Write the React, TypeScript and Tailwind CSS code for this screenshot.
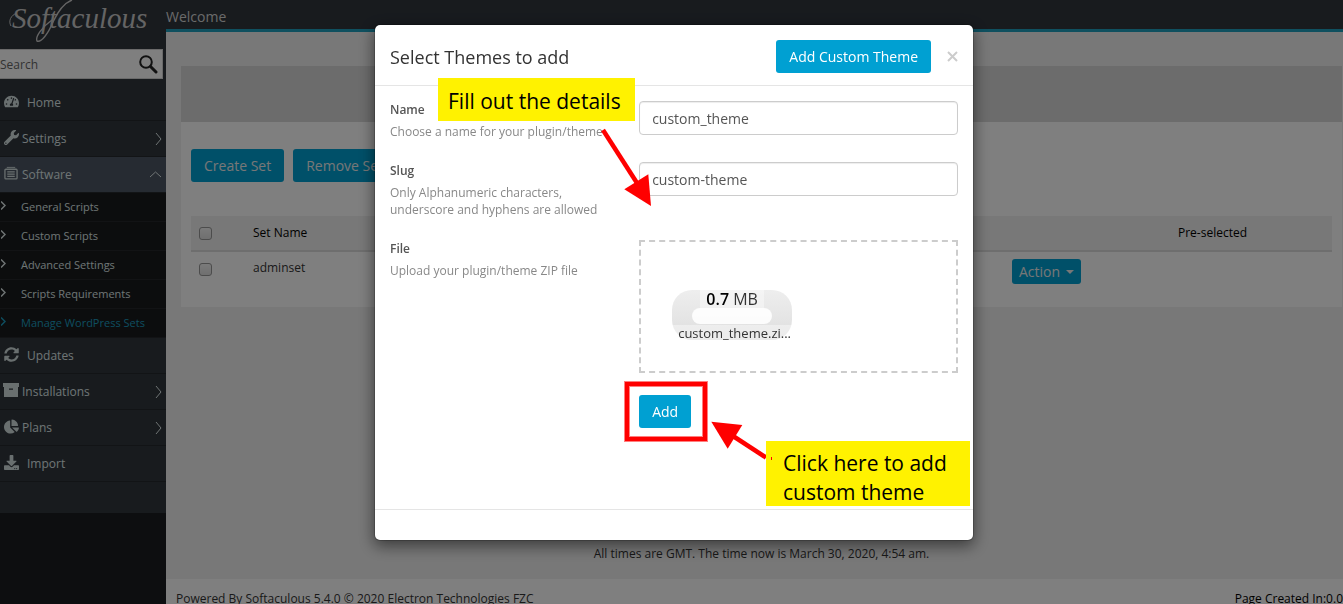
import { ReactNode, useState } from "react";
import {
  FaChartPie,
  FaDownload,
  FaSyncAlt,
  FaTachometerAlt,
  FaWrench,
} from "react-icons/fa";

type MenuItemProps = {
  icon: ReactNode;
  label: string;
  arrow?: "right" | "up";
  active?: boolean;
  wide?: boolean;
};

const subMenu = [
  "General Scripts",
  "Custom Scripts",
  "Advanced Settings",
  "Scripts Requirements",
  "Manage WordPress Sets",
];

const ListIcon = () => (
  <svg width="14" height="14" viewBox="0 0 15 14" fill="none" stroke="currentColor">
    <path d="M3 1h9" />
    <rect x="1" y="3" width="13" height="10.3" rx="1" strokeWidth="1.4" />
    <path d="M3.5 5.8h8M3.5 8.2h8M3.5 10.6h8" strokeWidth="1.2" />
  </svg>
);

const ArchiveIcon = () => (
  <svg width="16" height="14" viewBox="0 0 16 14" fill="currentColor">
    <path d="M0 0h16v4H0z" />
    <path d="M1 4h14v10H1zM6 5.600v1.200h4V5.600z" fillRule="evenodd" />
  </svg>
);

const MenuItem = (props: MenuItemProps) => {
  return (
    <a
      href="#"
      className={`flex h-9 items-center border-b border-[#24282d] pl-[3px] pr-1 text-[12px] text-[#dfe9e9] ${
        props.active ? "bg-[#4c5664]" : ""
      } ${props.wide ? "gap-2" : "gap-[3px]"}`}
    >
      <span className="flex w-4 shrink-0 justify-center pb-[3px] text-[15px] text-[#d2dede]">
        {props.icon}
      </span>
      <span className="flex-1">{props.label}</span>
      {props.arrow === "right" && (
        <svg width="7" height="14" viewBox="0 0 7 14" fill="none" stroke="currentColor">
          <path d="M1 1l5 6-5 6" />
        </svg>
      )}
      {props.arrow === "up" && (
        <svg width="13" height="7" viewBox="0 0 13 7" fill="none" stroke="currentColor">
          <path d="M1 6l5.500-5 5.500 5" />
        </svg>
      )}
    </a>
  );
};

const Sidebar = () => {
  return (
    <aside className="w-[166px] shrink-0 bg-[#1a1d20]">
      <div className="bg-[#30363d] pb-[31px]">
        <a href="#" className="relative block h-[49px] pl-3 text-[#c9c9c9]">
          <span className="block font-['Liberation_Serif',serif] text-[29px] leading-9 italic">
            Softaculous
          </span>
          <svg
            className="absolute left-2 top-0"
            width="80"
            height="46"
            viewBox="0 0 80 46"
            fill="none"
            stroke="currentColor"
          >
            <path d="M9 13C3 15 0 21 3 26" />
            <path d="M64 0C56 3 50 11 45 22C40 34 33 43 29 41C27 37 34 27 44 20" strokeWidth="1.400" />
          </svg>
        </a>
        <form className="mr-[3px] flex h-[30px] items-center border border-[#d5d5d5] border-l-0 bg-white">
          <input
            type="text"
            aria-label="Search"
            placeholder="Search"
            className="min-w-0 flex-1 pt-[2px] text-[12px] text-[#555] placeholder:text-[#666]"
          />
          <button type="button" aria-label="Search" className="pr-1">
            <svg width="20" height="20" viewBox="0 0 20 20" fill="none" stroke="#222">
              <circle cx="8" cy="8" r="5.800" strokeWidth="2" />
              <path d="M12.500 12.500l5.500 5.500" strokeWidth="3" strokeLinecap="round" />
            </svg>
          </button>
        </form>
        <nav className="pt-[6px]">
          <MenuItem icon={<FaTachometerAlt />} label="Home" wide />
          <MenuItem icon={<FaWrench />} label="Settings" arrow="right" />
          <MenuItem icon={<ListIcon />} label="Software" arrow="up" active />
          <ul className="bg-[#181a1c]">
            {subMenu.map((item, i) => (
              <li key={item}>
                <a
                  href="#"
                  className={`flex h-[29px] items-center gap-[15px] border-b border-[#24272a] pl-px text-[11px] ${
                    i === 4 ? "text-[#1d9cbf]" : "text-[#dfe9e9]"
                  }`}
                >
                  <svg className="mb-1" width="5" height="9" viewBox="0 0 5 9" fill="none" stroke="currentColor">
                    <path d="M0 .5l4 4-4 4" strokeWidth="1.500" />
                  </svg>
                  {item}
                </a>
              </li>
            ))}
          </ul>
          <MenuItem icon={<FaSyncAlt />} label="Updates" wide />
          <MenuItem icon={<ArchiveIcon />} label="Installations" arrow="right" />
          <MenuItem icon={<FaChartPie />} label="Plans" arrow="right" />
          <MenuItem icon={<FaDownload />} label="Import" wide />
        </nav>
      </div>
    </aside>
  );
};

const checkboxClass =
  "block size-[13px] appearance-none rounded-[3px] border border-[#999] bg-linear-to-b from-[#f5f5f5] to-[#e0e0e0]";

const SetsPage = () => {
  return (
    <div className="flex min-w-0 flex-1 flex-col bg-[#f0f0f0]">
      <header className="h-8 border-b-3 border-[#1ea1bf] bg-[#30363d] pt-[6px] text-[14px] leading-[22px] text-[#d5d5d5]">
        Welcome
      </header>
      <main className="flex flex-1 flex-col pl-[15px] pr-px pt-[34px]">
        <div className="h-14 bg-[#d9d9d9]" />
        <div className="bg-white px-[10px] pb-5 pt-[27px]">
          <div className="flex gap-[9px] text-[14px] text-[#eee]">
            <button className="h-[33px] rounded-[3px] bg-[#00a0d2] px-[13px]">Create Set</button>
            <button className="h-[33px] rounded-[3px] bg-[#00a0d2] px-[13px]">Remove Set</button>
          </div>
          <table className="mt-[34px] w-full table-fixed text-left text-[12px]">
            <thead>
              <tr className="h-[35px] border-b-2 border-[#ddd] bg-[#f0f0f0] text-black">
                <th className="w-[62px] pl-2">
                  <input type="checkbox" aria-label="Select all sets" className={checkboxClass} />
                </th>
                <th className="font-medium">Set Name</th>
                <th className="w-[166px]"></th>
                <th className="w-[154px] font-medium">Pre-selected</th>
              </tr>
            </thead>
            <tbody>
              <tr className="h-9 align-top text-[#333]">
                <td className="pl-2 pt-[11px]">
                  <input type="checkbox" aria-label="Select adminset" className={checkboxClass} />
                </td>
                <td className="pt-[7px] leading-[18px]">adminset</td>
                <td className="pt-[7px]">
                  <button className="flex h-[25px] items-center gap-[6px] rounded-[3px] bg-[#00a0d2] px-[7px] text-[14px] text-[#eee]">
                    Action
                    <svg width="8" height="4" viewBox="0 0 8 4" fill="currentColor">
                      <path d="M0 0h8L4 4z" />
                    </svg>
                  </button>
                </td>
                <td></td>
              </tr>
            </tbody>
          </table>
        </div>
        <p className="mt-auto pb-4 text-center text-[12px] leading-[18px] text-[#333]">
          All times are GMT. The time now is March 30, 2020, 4:54 am.
        </p>
      </main>
      <footer className="flex h-[25px] shrink-0 justify-between bg-white pl-[10px] pt-[11px] text-[12px] leading-[18px] text-[#333]">
        <span>Powered By Softaculous 5.4.0 © 2020 Electron Technologies FZC</span>
        <span className="text-black">Page Created In:0.0</span>
      </footer>
    </div>
  );
};

type FieldProps = {
  id: string;
  label: string;
  help: ReactNode;
  children: ReactNode;
};

const Field = (props: FieldProps) => {
  return (
    <div className="grid grid-cols-12">
      <div className="col-span-5 pl-[15px]">
        <label htmlFor={props.id} className="block text-[12px] leading-[17px] font-semibold text-[#555]">
          {props.label}
        </label>
        <p className="mt-[5px] text-[12px] leading-[17px] whitespace-nowrap text-[#888]">{props.help}</p>
      </div>
      <div className="col-span-7 px-[15px]">{props.children}</div>
    </div>
  );
};

const inputClass =
  "block h-[34px] w-full rounded-[4px] border border-[#ccc] px-3 text-[14px] text-[#555] shadow-[inset_0_1px_1px_rgba(0,0,0,0.075)]";

// Callouts drawn over the dialog, positioned from its top left corner
const Callouts = () => {
  return (
    <div className="pointer-events-none absolute inset-0 font-['Open_Sans',sans-serif] text-[21px] text-black">
      <svg className="absolute left-0 top-0" width="598" height="515" viewBox="375 25 598 515">
        <path d="M603 130L637 183" stroke="#f00" strokeWidth="4.500" />
        <path d="M651 206L624.300 189.300L648.300 174.300Z" fill="#f00" />
        <path d="M766 457.500L733 436" stroke="#f00" strokeWidth="4.500" />
        <path d="M711.300 421.700L742.300 425L727.700 448.700Z" fill="#f00" />
      </svg>
      <div className="absolute left-[250px] top-[357px] h-[59px] w-[82px] border-4 border-[#ff0000] shadow-[0_0_0_1px_rgba(255,0,0,0.5),inset_0_0_0_1px_rgba(255,0,0,0.5)]" />
      <p className="absolute left-[63px] top-[53px] h-[43px] w-[197px] bg-[#fff200] pl-[10px] leading-[46px] whitespace-nowrap">
        Fill out the details
      </p>
      <p className="absolute left-[391px] top-[416px] h-[65px] w-[204px] bg-[#fff200] pl-[17px] pt-2 leading-[29px] whitespace-nowrap">
        Click here to add
        <br />
        custom theme
      </p>
      <span className="absolute left-[396px] top-[432px] h-[3px] w-px bg-[#f00]" />
    </div>
  );
};

const AddThemeModal = () => {
  const [name, setName] = useState("custom_theme");
  const [slug, setSlug] = useState("custom-theme");

  return (
    <div className="fixed inset-0 flex items-start justify-center bg-black/50 pl-[5px] pt-6">
      <div
        role="dialog"
        aria-labelledby="modal-title"
        className="relative w-[600px] rounded-[6px] border border-black/20 bg-white bg-clip-padding shadow-[0_5px_15px_rgba(0,0,0,0.5)]"
      >
        <div className="flex items-center border-b border-[#e5e5e5] px-[15px] pb-3 pt-[15px]">
          <h4 id="modal-title" className="flex-1 pt-px text-[18px] text-[#333]">
            Select Themes to add
          </h4>
          <button className="h-[33px] rounded-[3px] bg-[#00a0d2] px-[13px] text-[14px] font-medium text-white">
            Add Custom Theme
          </button>
          <button aria-label="Close" className="ml-4 text-[#ccc]">
            <svg width="11" height="11" viewBox="0 0 11 11" stroke="currentColor" strokeWidth="2">
              <path d="M1 1l9 9M10 1l-9 9" />
            </svg>
          </button>
        </div>
        <form className="pb-[81px] pt-[15px]" onSubmit={(e) => e.preventDefault()}>
          <Field id="name" label="Name" help="Choose a name for your plugin/theme">
            <input id="name" className={inputClass} value={name} onChange={(e) => setName(e.target.value)} />
          </Field>
          <div className="pt-[22px]">
            <Field
              id="slug"
              label="Slug"
              help={
                <>
                  Only Alphanumeric characters,
                  <br />
                  underscore and hyphens are allowed
                </>
              }
            >
              <input id="slug" className={inputClass} value={slug} onChange={(e) => setSlug(e.target.value)} />
            </Field>
          </div>
          <div className="pt-[22px]">
            <Field id="file" label="File" help="Upload your plugin/theme ZIP file">
              <button
                type="button"
                id="file"
                className="block h-[133px] w-full border-2 border-dashed border-[#ccc] pl-[31px]"
              >
                <span className="mt-[17px] flex h-[50px] w-[120px] flex-col items-center rounded-[20px] bg-linear-to-b from-[#eee] to-[#dedede]">
                  <span className="bg-white/40 px-[6px] text-[16px] leading-[18px] text-[#333]">
                    <strong className="font-semibold text-black">0.7</strong> MB
                  </span>
                  <span className="h-4 w-20 shrink-0 rounded-full bg-white/90" />
                  <span className="mt-px w-full rounded-b-[15px] bg-white/40 pl-[6px] text-left text-[13px] leading-[17px] whitespace-nowrap text-[#333]">
                    custom_theme.zi...
                  </span>
                </span>
              </button>
              <button
                type="submit"
                className="mt-[22px] block h-[33px] rounded-[3px] bg-[#00a0d2] px-[13px] text-[14px] font-medium text-white"
              >
                Add
              </button>
            </Field>
          </div>
        </form>
        <div className="h-[31px] border-t border-[#e5e5e5]" />
        <Callouts />
      </div>
    </div>
  );
};

const App = () => {
  return (
    <div className="flex h-screen overflow-hidden font-['Open_Sans',sans-serif]">
      <Sidebar />
      <SetsPage />
      <AddThemeModal />
    </div>
  );
};

export default App;
